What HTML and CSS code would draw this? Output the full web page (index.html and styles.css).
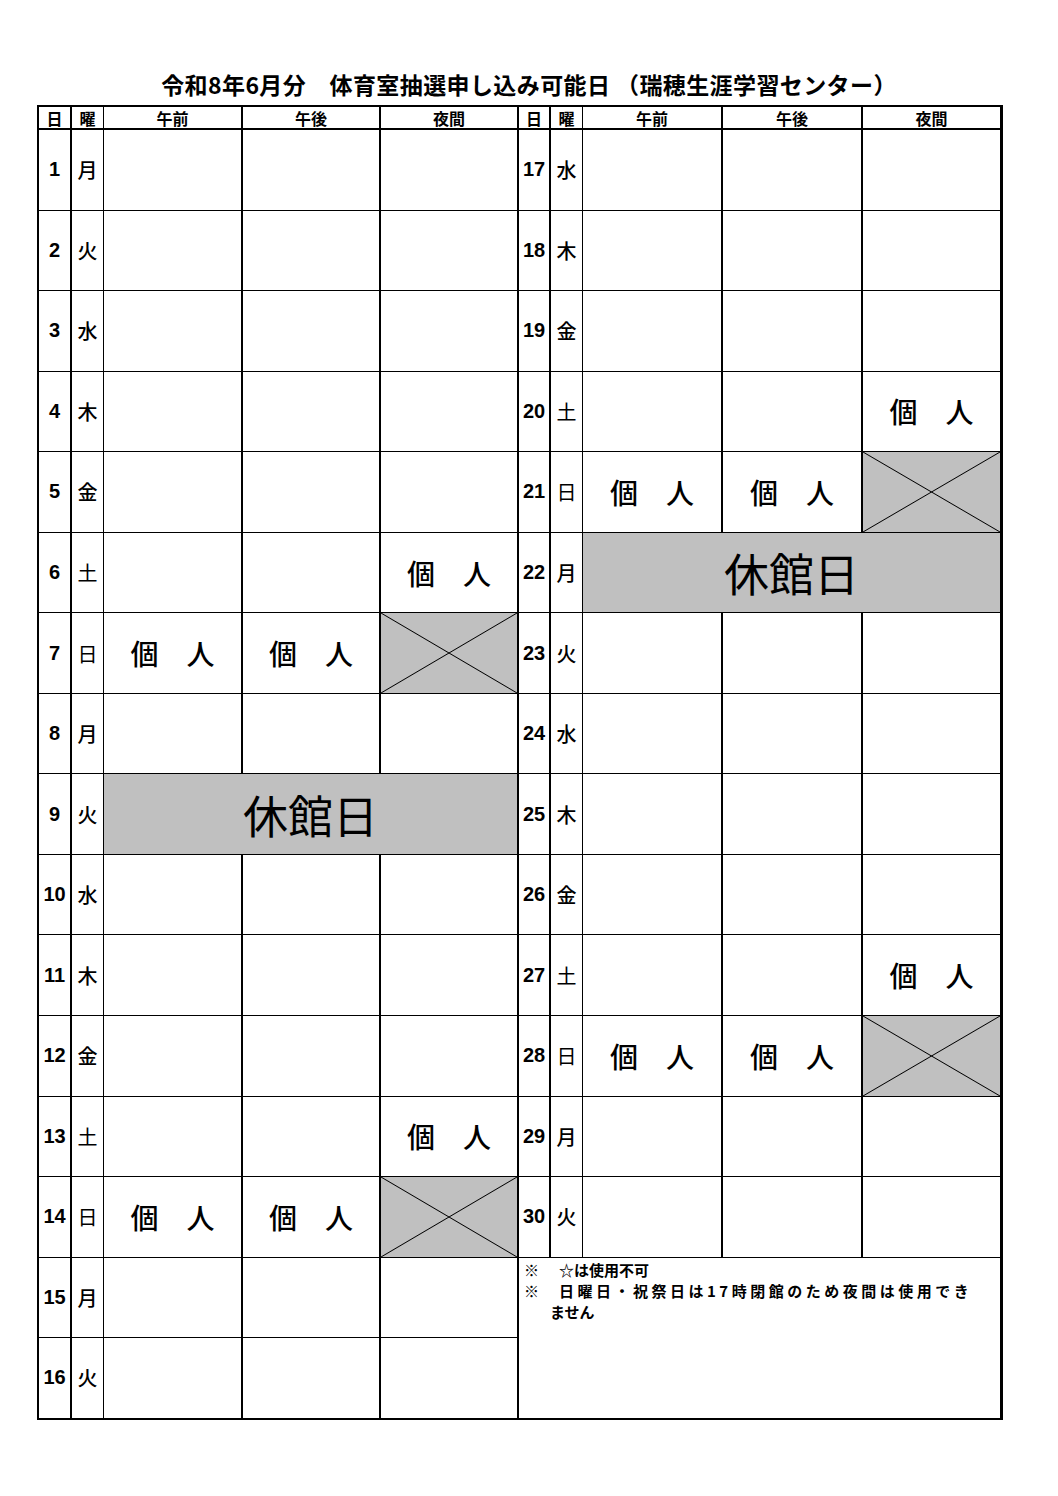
FILE: index.html
```html
<!DOCTYPE html>
<html lang="ja">
<head>
<meta charset="utf-8">
<title>体育室抽選申し込み可能日</title>
<link rel="stylesheet" href="styles.css">
</head>
<body>
<div class="page">
  <h1 class="title">令和8年6月分　体育室抽選申し込み可能日 （瑞穂生涯学習センター）</h1>
  <div class="sheet">
    <div class="h">日</div><div class="h w">曜</div><div class="h">午前</div><div class="h">午後</div><div class="h">夜間</div>
    <div class="h">日</div><div class="h w">曜</div><div class="h">午前</div><div class="h">午後</div><div class="h e">夜間</div>

    <div class="d">1</div><div class="w">月</div><div class="s"></div><div class="s"></div><div class="s"></div>
    <div class="d">17</div><div class="w">水</div><div class="s"></div><div class="s"></div><div class="s e"></div>

    <div class="d">2</div><div class="w">火</div><div class="s"></div><div class="s"></div><div class="s"></div>
    <div class="d">18</div><div class="w">木</div><div class="s"></div><div class="s"></div><div class="s e"></div>

    <div class="d">3</div><div class="w">水</div><div class="s"></div><div class="s"></div><div class="s"></div>
    <div class="d">19</div><div class="w">金</div><div class="s"></div><div class="s"></div><div class="s e"></div>

    <div class="d">4</div><div class="w">木</div><div class="s"></div><div class="s"></div><div class="s"></div>
    <div class="d">20</div><div class="w lt">土</div><div class="s"></div><div class="s"></div><div class="s e">個　人</div>

    <div class="d">5</div><div class="w">金</div><div class="s"></div><div class="s"></div><div class="s"></div>
    <div class="d">21</div><div class="w lt">日</div><div class="s">個　人</div><div class="s">個　人</div><div class="s e x"></div>

    <div class="d">6</div><div class="w lt">土</div><div class="s"></div><div class="s"></div><div class="s">個　人</div>
    <div class="d">22</div><div class="w">月</div><div class="closed e">休館日</div>

    <div class="d">7</div><div class="w lt">日</div><div class="s">個　人</div><div class="s">個　人</div><div class="s x"></div>
    <div class="d">23</div><div class="w">火</div><div class="s"></div><div class="s"></div><div class="s e"></div>

    <div class="d">8</div><div class="w">月</div><div class="s"></div><div class="s"></div><div class="s"></div>
    <div class="d">24</div><div class="w">水</div><div class="s"></div><div class="s"></div><div class="s e"></div>

    <div class="d">9</div><div class="w">火</div><div class="closed">休館日</div>
    <div class="d">25</div><div class="w">木</div><div class="s"></div><div class="s"></div><div class="s e"></div>

    <div class="d">10</div><div class="w">水</div><div class="s"></div><div class="s"></div><div class="s"></div>
    <div class="d">26</div><div class="w">金</div><div class="s"></div><div class="s"></div><div class="s e"></div>

    <div class="d">11</div><div class="w">木</div><div class="s"></div><div class="s"></div><div class="s"></div>
    <div class="d">27</div><div class="w lt">土</div><div class="s"></div><div class="s"></div><div class="s e">個　人</div>

    <div class="d">12</div><div class="w">金</div><div class="s"></div><div class="s"></div><div class="s"></div>
    <div class="d">28</div><div class="w lt">日</div><div class="s">個　人</div><div class="s">個　人</div><div class="s e x"></div>

    <div class="d">13</div><div class="w lt">土</div><div class="s"></div><div class="s"></div><div class="s">個　人</div>
    <div class="d">29</div><div class="w">月</div><div class="s"></div><div class="s"></div><div class="s e"></div>

    <div class="d">14</div><div class="w lt">日</div><div class="s">個　人</div><div class="s">個　人</div><div class="s x"></div>
    <div class="d">30</div><div class="w">火</div><div class="s"></div><div class="s"></div><div class="s e"></div>

    <div class="d">15</div><div class="w">月</div><div class="s"></div><div class="s"></div><div class="s"></div>
    <div class="notes">
      <p class="nl"><span class="mk">※</span><span class="tx">☆は使用不可</span></p>
      <p class="nl"><span class="mk">※</span><span class="tx spread">日曜日・祝祭日は17時閉館のため夜間は使用でき</span></p>
      <p class="nl cont">ません</p>
    </div>

    <div class="d">16</div><div class="w">火</div><div class="s"></div><div class="s"></div><div class="s"></div>
  </div>
</div>
</body>
</html>
```

FILE: styles.css
```css
html, body {
  margin: 0;
  padding: 0;
  background: #ffffff;
}

body {
  font-family: "Noto Sans CJK JP", "Noto Sans", sans-serif;
  color: #000000;
}

.page {
  width: 1058px;
  padding-top: 70px;
}

.title {
  margin: 0;
  height: 28px;
  font-size: 23px;
  line-height: 28px;
  font-weight: bold;
  letter-spacing: 0.4px;
  text-align: center;
  white-space: nowrap;
}

.sheet {
  display: grid;
  grid-template-columns: 33px 32px 139px 138px 138px 32px 32px 140px 140px 137px;
  grid-template-rows: 23px repeat(16, 80.56px);
  width: max-content;
  margin: 7px 0 0 37px;
  border: 2px solid #000;
  border-right-width: 3px;
  border-bottom-width: 1px;
}

.sheet > div {
  box-sizing: border-box;
  display: flex;
  align-items: center;
  justify-content: center;
  min-width: 0;
  overflow: hidden;
  border-right: 2px solid #000;
  border-bottom: 1px solid #000;
  white-space: nowrap;
}

.sheet > .w {
  border-right-width: 1px;
}

.sheet > .e {
  border-right: 0;
}

.sheet > .h {
  overflow: visible;
  border-bottom-width: 2px;
  font-size: 16px;
  font-weight: bold;
  line-height: 1;
}

.d {
  font-family: "Liberation Sans", Arial, sans-serif;
  font-weight: bold;
  font-size: 20px;
}

.w {
  font-size: 20px;
  font-weight: 500;
}

.w.lt {
  font-weight: normal;
}

.s {
  font-size: 28px;
  font-weight: 500;
}

.x {
  background:
    linear-gradient(to top right, transparent calc(50% - 0.9px), #000 50%, transparent calc(50% + 0.9px)),
    linear-gradient(to bottom right, transparent calc(50% - 0.9px), #000 50%, transparent calc(50% + 0.9px)),
    #c0c0c0;
}

.closed {
  grid-column: span 3;
  background: #c0c0c0;
  font-size: 45px;
  font-weight: normal;
}

.sheet > .notes {
  grid-column: span 5;
  grid-row: span 2;
  display: block;
  overflow: visible;
  border-right: 0;
  padding: 1px 0 0 5px;
  font-size: 15px;
  line-height: 21px;
  font-weight: bold;
}

.nl {
  margin: 0;
  display: flex;
  height: 21px;
}

.mk {
  width: 35px;
  flex: none;
}

.spread {
  letter-spacing: 3.5px;
}

.cont {
  padding-left: 26px;
}
```
